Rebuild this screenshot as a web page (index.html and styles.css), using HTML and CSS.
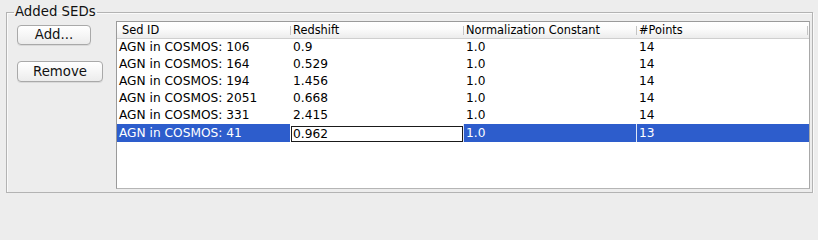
FILE: index.html
```html
<!DOCTYPE html>
<html>
<head>
<meta charset="utf-8">
<link rel="stylesheet" href="styles.css">
</head>
<body>
<fieldset class="group">
  <legend class="group-title">Added SEDs</legend>
  <div class="group-body">
    <div class="actions">
      <button class="btn btn-add">Add...</button>
      <button class="btn btn-remove">Remove</button>
    </div>
    <div class="pane">
      <table class="grid">
        <thead>
          <tr><th>Sed ID</th><th>Redshift</th><th>Normalization Constant</th><th>#Points</th></tr>
        </thead>
        <tbody>
          <tr><td>AGN in COSMOS: 106</td><td>0.9</td><td>1.0</td><td>14</td></tr>
          <tr><td>AGN in COSMOS: 164</td><td>0.529</td><td>1.0</td><td>14</td></tr>
          <tr><td>AGN in COSMOS: 194</td><td>1.456</td><td>1.0</td><td>14</td></tr>
          <tr><td>AGN in COSMOS: 2051</td><td>0.668</td><td>1.0</td><td>14</td></tr>
          <tr><td>AGN in COSMOS: 331</td><td>2.415</td><td>1.0</td><td>14</td></tr>
          <tr class="selected"><td>AGN in COSMOS: 41</td><td class="editing"><div class="editor">0.962</div></td><td>1.0</td><td>13</td></tr>
        </tbody>
      </table>
    </div>
  </div>
</fieldset>
</body>
</html>
```
FILE: styles.css
```css
html, body {
  margin: 0;
  padding: 0;
  background: #ededed;
  font-family: "DejaVu Sans", "Liberation Sans", sans-serif;
  color: #000;
}

.group {
  margin: 4px 5px 0 6px;
  padding: 0;
  border: 1px solid #b3b3b3;
  box-shadow: 1px 1px 0 #fafafa, inset 1px 1px 0 #fafafa;
  min-inline-size: 0;
}

.group-title {
  margin-left: 7px;
  padding: 0 1px;
  font-size: 13.3px;
  line-height: 16px;
  color: #111;
}

.group-body {
  display: flex;
  padding: 1px 2px 3px 10px;
}

.actions {
  width: 99px;
  flex: none;
  display: flex;
  flex-direction: column;
  align-items: flex-start;
}

.btn {
  font-family: "DejaVu Sans", "Liberation Sans", sans-serif;
  font-size: 13.3px;
  color: #111;
  border: 1px solid #a9a9a9;
  border-radius: 4px;
  background: linear-gradient(to bottom, #ffffff 0%, #f6f6f6 50%, #ececec 100%);
  box-shadow: 0 1px 0 rgba(0, 0, 0, 0.08);
  padding: 0;
  margin: 0;
  line-height: 18px;
  text-align: center;
}

.btn-add {
  width: 74px;
  height: 20px;
  margin-top: 4px;
}

.btn-remove {
  width: 86px;
  height: 21px;
  margin-top: 16px;
}

.pane {
  width: 694px;
  height: 168px;
  box-sizing: border-box;
  border: 1px solid #9a9a9a;
  border-right-color: #a8a8a8;
  border-bottom-color: #b5b5b5;
  background: #fff;
  overflow: hidden;
}

.grid {
  width: 692px;
  table-layout: fixed;
  border-collapse: separate;
  border-spacing: 0;
}

.grid th {
  position: relative;
  height: 16px;
  padding: 0 0 0 3px;
  font-size: 11.4px;
  font-weight: normal;
  text-align: left;
  line-height: 16px;
  color: #000;
  background: linear-gradient(to bottom, #ffffff 0%, #fbfbfb 45%, #ececec 100%);
  border-bottom: 1px solid #cfcfcf;
  white-space: nowrap;
  overflow: hidden;
}

.grid th:first-child {
  padding-left: 5px;
}

.grid th + th::before,
.grid th:last-child::after {
  content: "";
  position: absolute;
  top: 4px;
  bottom: 3px;
  width: 1px;
  background: #c4c4c4;
}

.grid th + th::before {
  left: 0;
}

.grid th:last-child::after {
  right: 1px;
}

.grid td {
  height: 17px;
  padding: 0 0 0 3px;
  font-size: 12.2px;
  line-height: 17px;
  white-space: nowrap;
  overflow: hidden;
}

.grid td:first-child {
  padding-left: 2px;
}

.grid tr.selected td {
  background: #2d5dcc;
  color: #fff;
}

.grid tr.selected td + td {
  box-shadow: inset 1px 0 0 #dfe6f6;
}

.grid tr.selected td.editing {
  background: #fff;
  color: #000;
  padding: 1px 0 0 1px;
  box-shadow: inset 1px 0 0 #ffffff;
}

.editor {
  box-sizing: border-box;
  height: 16px;
  border: 1px solid #1a1a1a;
  padding-left: 1px;
  line-height: 14px;
}
```
